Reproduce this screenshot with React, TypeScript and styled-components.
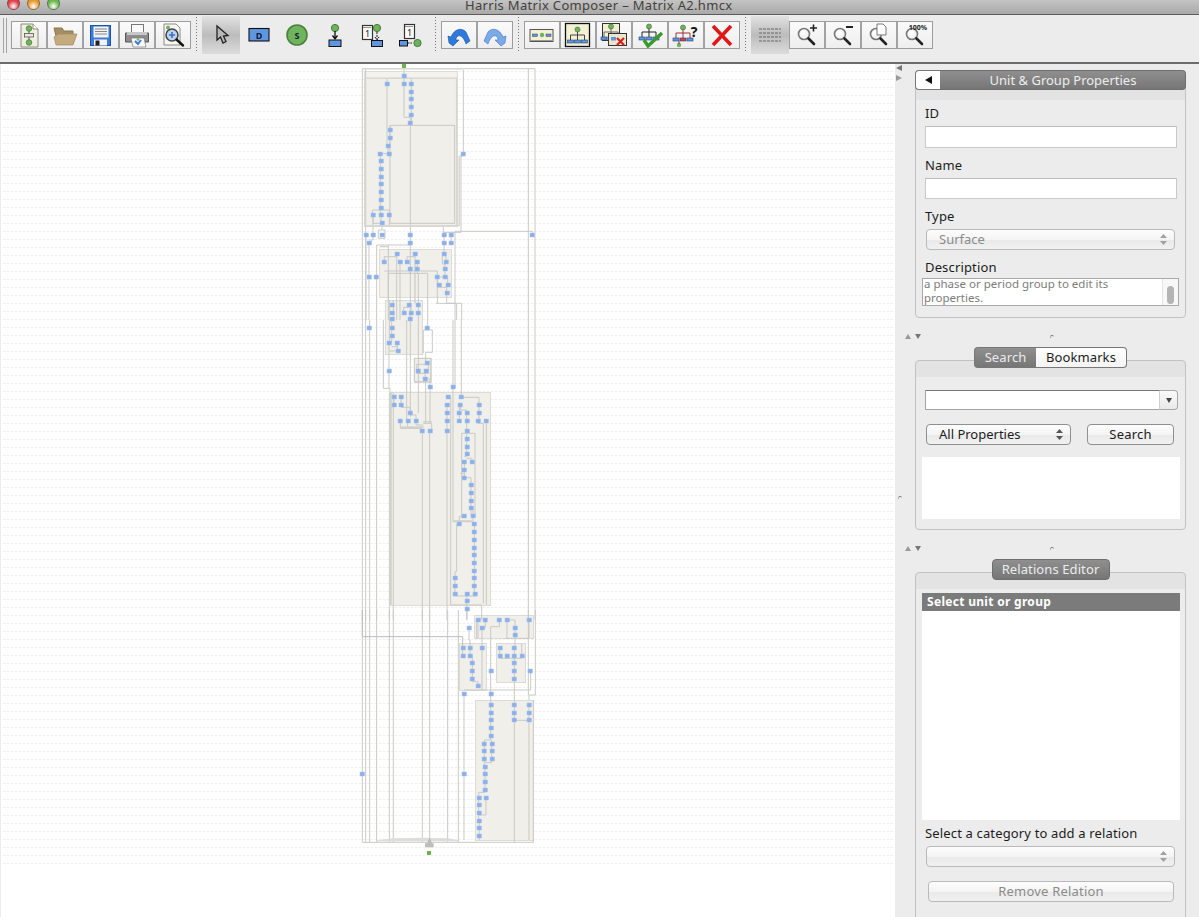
import React from 'react';
import styled, { createGlobalStyle } from 'styled-components';

const GlobalStyle = createGlobalStyle`
  html, body {
    margin: 0;
    padding: 0;
    background: #ececec;
    overflow: hidden;
  }
  * {
    box-sizing: border-box;
  }
`;

const UI_FONT = `"Noto Sans", "DejaVu Sans", sans-serif`;

const Window = styled.div`
  width: 1199px;
  height: 917px;
  overflow: hidden;
  display: flex;
  flex-direction: column;
  font-family: ${UI_FONT};
  font-size: 13px;
  color: #1c1c1c;
`;

const TitleBar = styled.div`
  height: 15px;
  flex: none;
  display: flex;
  align-items: flex-start;
  overflow: hidden;
  padding-left: 7px;
  background: linear-gradient(#c4c4c4, #a9a9a9);
  border-bottom: 1px solid #5c5c5c;
`;

const Light = styled.span<{ $color: string }>`
  width: 13px;
  height: 13px;
  flex: none;
  margin: -3px 7px 0 0;
  border-radius: 50%;
  border: 1px solid rgba(70, 70, 70, 0.55);
  background: radial-gradient(circle at 50% 75%, #fff 0, ${p => p.$color} 55%);
`;

const Title = styled.span`
  margin: -4px 0 0 398px;
  font-size: 13px;
  line-height: 18px;
  letter-spacing: 0.32px;
  color: #453f3c;
  white-space: nowrap;
`;

const Toolbar = styled.div`
  height: 49px;
  flex: none;
  display: flex;
  align-items: center;
  padding: 0 0 7px 3px;
  background: #ececec;
  border-bottom: 2px solid #6c6c6c;
`;

const Grip = styled.div`
  width: 4px;
  height: 35px;
  margin-right: 4px;
  border-left: 1px solid #a4a4a4;
  border-right: 1px solid #a4a4a4;
`;

const ButtonGroup = styled.div`
  display: flex;
  height: 28px;
  border: 1px solid #9d9d9d;
`;

const ToolButton = styled.div`
  width: 36px;
  display: flex;
  align-items: center;
  justify-content: center;
  border-left: 2px solid #a2a2a2;
  background: linear-gradient(#fafafa, #eeeeee);

  &:first-child {
    width: 34px;
    border-left: none;
  }
`;

const PlainTool = styled.div<{ $on?: boolean }>`
  width: 38px;
  height: 38px;
  flex: none;
  display: flex;
  align-items: center;
  justify-content: center;
  background: ${p => (p.$on ? 'linear-gradient(#e2e2e2, #bcbcbc 50%, #dcdcdc)' : 'transparent')};
`;

const Separator = styled.div`
  width: 11px;
  height: 36px;
  flex: none;
  background: repeating-linear-gradient(#777 0 1px, transparent 1px 3px) 5px 0 / 1px 100% no-repeat;
`;

const Body = styled.div`
  flex: 1;
  display: flex;
  min-height: 0;
`;

const Canvas = styled.div`
  width: 895px;
  flex: none;
  background-color: #fff;
  background-image:
    repeating-linear-gradient(90deg, rgba(255, 255, 255, 0.75) 0 2px, transparent 2px 4px),
    repeating-linear-gradient(#efefef 0 1px, transparent 1px 8px);
  background-size: 100% 795px;
  background-position: 0 7px;
  background-repeat: no-repeat;
  border-left: 1px solid #ececec;
`;

const DiagramSvg = styled.svg`
  display: block;
  margin-left: -1px;
`;

const Panel = styled.div`
  flex: 1;
  display: flex;
  min-width: 0;
  background: #ececec;
`;

const Gutter = styled.div`
  width: 20px;
  flex: none;
  display: flex;
  flex-direction: column;
  padding: 1px 0 0 1px;
`;

const TriLeft = styled.span`
  width: 0;
  height: 0;
  margin: 0 0 4px 0;
  border-top: 3px solid transparent;
  border-bottom: 3px solid transparent;
  border-right: 6px solid #777;
`;

const TriRight = styled(TriLeft)`
  border-right: none;
  border-left: 6px solid #999;
`;

const Dot = styled.span<{ $top?: number; $left?: number }>`
  width: 4px;
  height: 3px;
  margin-top: ${p => p.$top ?? 0}px;
  margin-left: ${p => p.$left ?? 0}px;
  border-radius: 3px 3px 0 0;
  border-top: 1.5px solid #777;
  border-left: 1px solid #aaa;
`;

const Column = styled.div`
  width: 271px;
  flex: none;
  display: flex;
  flex-direction: column;
  padding-top: 16px;
`;

const Box = styled.div<{ $band: number; $height: number }>`
  flex: none;
  height: ${p => p.$height}px;
  display: flex;
  flex-direction: column;
  border: 1px solid #c2c2c2;
  border-radius: 4px;
  background: linear-gradient(#e3e3e3 0 ${p => p.$band}px, #ececec ${p => p.$band}px);
`;

const HeaderBar = styled.div`
  display: flex;
  height: 20px;
  margin: -11px -1px 0;
`;

const BackButton = styled.div`
  width: 25px;
  display: flex;
  align-items: center;
  justify-content: center;
  background: #fff;
  border: 1px solid #777;
  border-right: none;
  border-radius: 4px 0 0 4px;
`;

const BackArrow = styled.span`
  width: 0;
  height: 0;
  border-top: 4.5px solid transparent;
  border-bottom: 4.5px solid transparent;
  border-right: 7px solid #111;
`;

const HeaderTitle = styled.div`
  flex: 1;
  text-align: center;
  padding-left: 1px;
  line-height: 18px;
  color: #ededed;
  background: linear-gradient(#8f8f8f, #767676);
  border: 1px solid #6e6e6e;
  border-left: none;
  border-radius: 0 4px 4px 0;
`;

const FieldLabel = styled.div<{ $top: number }>`
  height: 16px;
  margin: ${p => p.$top}px 0 0 9px;
  line-height: 16px;
  letter-spacing: 0.15px;
  white-space: nowrap;
`;

const TextField = styled.div<{ $height: number }>`
  width: 252px;
  height: ${p => p.$height}px;
  margin: 5px 0 0 9px;
  background: #fff;
  border: 1px solid #c9c9c9;
  border-top-color: #bbb;
`;

const SelectBox = styled.div<{ $width: number; $muted?: boolean; $top: number; $left?: number }>`
  width: ${p => p.$width}px;
  height: 21px;
  margin: ${p => p.$top}px 0 0 ${p => p.$left ?? 10}px;
  flex: none;
  display: flex;
  align-items: center;
  justify-content: space-between;
  padding: 0 7px 1px 12px;
  border: 1px solid ${p => (p.$muted ? '#b9b9b9' : '#8f8f8f')};
  border-radius: 4px;
  color: ${p => (p.$muted ? '#8a8a8a' : '#1c1c1c')};
  background: linear-gradient(#fdfdfd, #f4f4f4 50%, #e9e9e9 52%, #f1f1f1);
`;

const DescriptionArea = styled.div`
  width: 257px;
  height: 28px;
  margin: 3px 0 0 6px;
  display: flex;
  background: #fff;
  border: 1px solid #a8a8a8;
`;

const DescriptionText = styled.div`
  flex: 1;
  margin-top: -2px;
  padding-left: 1px;
  font-size: 11.5px;
  line-height: 14px;
  color: #7c7c7c;
  white-space: nowrap;
`;

const ScrollTrack = styled.div`
  width: 16px;
  padding: 7px 4px 1px;
  border-left: 1px solid #e4e4e4;
  background: #f8f8f8;
`;

const ScrollThumb = styled.div`
  height: 18px;
  border-radius: 4px;
  background: #b4b4b4;
`;

const Splitter = styled.div`
  height: 12px;
  margin: 12px 0 18px -10px;
  flex: none;
  display: flex;
  align-items: center;
`;

const TriUp = styled.span`
  width: 0;
  height: 0;
  margin-right: 4px;
  border-left: 3.5px solid transparent;
  border-right: 3.5px solid transparent;
  border-bottom: 5px solid #999;
`;

const TriDown = styled.span`
  width: 0;
  height: 0;
  border-left: 3.5px solid transparent;
  border-right: 3.5px solid transparent;
  border-top: 5px solid #777;
`;

const TabRow = styled.div`
  display: flex;
  justify-content: center;
  height: 21px;
  margin-top: -14px;
  flex: none;
`;

const Tab = styled.div<{ $on?: boolean; $width: number }>`
  width: ${p => p.$width}px;
  text-align: center;
  line-height: 19px;
  letter-spacing: 0.1px;
  color: ${p => (p.$on ? '#ececec' : '#1c1c1c')};
  background: ${p => (p.$on ? 'linear-gradient(#8f8f8f, #767676)' : 'linear-gradient(#fff, #f4f4f4)')};
  border: 1px solid #777;

  &:first-child {
    border-radius: 4px 0 0 4px;
    border-right: none;
  }
  &:last-child {
    border-radius: 0 4px 4px 0;
    border-left: none;
  }
  &:only-child {
    border: 1px solid #6e6e6e;
    border-radius: 4px;
  }
`;

const ComboRow = styled.div`
  display: flex;
  height: 20px;
  margin: 22px 0 0 9px;
  flex: none;
`;

const ComboInput = styled.div`
  width: 235px;
  background: #fff;
  border: 1px solid #a4a4a4;
  border-top-color: #777;
  border-right-color: #cfcfcf;
`;

const ComboArrow = styled.div`
  width: 18px;
  display: flex;
  align-items: center;
  justify-content: center;
  background: linear-gradient(#fafafa, #e9e9e9);
  border: 1px solid #a8a8a8;
  border-left: none;
  border-radius: 0 4px 4px 0;
`;

const SmallDown = styled.span`
  width: 0;
  height: 0;
  border-left: 3.5px solid transparent;
  border-right: 3.5px solid transparent;
  border-top: 5px solid #444;
`;

const ActionsRow = styled.div`
  display: flex;
  flex: none;
`;

const PushButton = styled.div<{ $width: number; $left: number; $top: number; $muted?: boolean }>`
  width: ${p => p.$width}px;
  height: 21px;
  margin: ${p => p.$top}px 0 0 ${p => p.$left}px;
  flex: none;
  text-align: center;
  line-height: 18px;
  letter-spacing: 0.2px;
  color: ${p => (p.$muted ? '#8a8a8a' : '#1c1c1c')};
  border: 1px solid ${p => (p.$muted ? '#b9b9b9' : '#8f8f8f')};
  border-radius: 4px;
  background: linear-gradient(#fdfdfd, #f4f4f4 50%, #e9e9e9 52%, #f1f1f1);
`;

const ListArea = styled.div<{ $height: number; $top: number }>`
  width: 258px;
  height: ${p => p.$height}px;
  margin: ${p => p.$top}px 0 0 6px;
  flex: none;
  background: #fff;
`;

const ListHeader = styled.div`
  padding-left: 5px;
  font-weight: 700;
  font-size: 12px;
  line-height: 18px;
  letter-spacing: 0.3px;
  color: #fff;
  background: #7b7b7b;
`;

const StepperIcon = ({ color = '#555' }: { color?: string }) => (
  <svg width="7" height="11" viewBox="0 0 7 11">
    <path d="M3.5 0 L7 4 H0 Z M0 7 H7 L3.5 11 Z" fill={color} />
  </svg>
);

const C = {
  green: '#6eb45c',
  greenEdge: '#47773b',
  blue: '#5f96e2',
  cream: '#f3f0d4',
};

const Tree = ({ stroke = '#333', x = 0, y = 0, red = false }: { stroke?: string; x?: number; y?: number; red?: boolean }) => (
  <g transform={`translate(${x} ${y})`}>
    <path d="M11 5 V9 M4 9 H18 M4 9 V14 M11 9 V14 M18 9 V14" stroke={stroke} fill="none" />
    <circle cx="11" cy="3.5" r="2.5" fill={C.green} stroke={C.greenEdge} strokeWidth=".7" />
    <rect x="1" y="14" width="6" height="3" fill={C.blue} stroke="#24406e" strokeWidth=".6" />
    <rect x="8" y="14" width="6" height="3" fill={red ? '#d84040' : C.blue} stroke="#24406e" strokeWidth=".6" />
    <rect x="15" y="14" width="6" height="3" fill={C.blue} stroke="#24406e" strokeWidth=".6" />
  </g>
);

const Lens = () => (
  <g>
    <circle cx="11" cy="12" r="5.5" fill="#f4f4f4" stroke="#777" strokeWidth="1.6" />
    <circle cx="10" cy="11" r="2.6" fill="#fff" />
    <path d="M15.5 16.5 L21 22" stroke="#222" strokeWidth="2.6" strokeLinecap="round" />
  </g>
);

const Ico = ({ children, w = 28, h = 26 }: { children: React.ReactNode; w?: number; h?: number }) => (
  <svg width={w} height={h} viewBox={`0 0 ${w} ${h}`}>
    {children}
  </svg>
);

const fileIcons: React.ReactNode[] = [
  <Ico key="new">
    <path d="M6 2 H18 L23 7 V25 H6 Z" fill="#f0efdf" stroke="#8a8a80" />
    <path d="M18 2 V7 H23" fill="#fff" stroke="#8a8a80" />
    <path d="M14 6 V21" stroke="#555" />
    <circle cx="14" cy="6.5" r="2.8" fill={C.green} stroke={C.greenEdge} strokeWidth=".7" />
    <rect x="9.5" y="11.5" width="9" height="3.5" fill="#e8e8e0" stroke="#555" strokeWidth=".8" />
    <circle cx="14" cy="20.5" r="2.8" fill={C.green} stroke={C.greenEdge} strokeWidth=".7" />
  </Ico>,
  <Ico key="open">
    <path d="M3 6 H11 L13 9 H22 V22 H7 Z" fill="#a48e63" stroke="#8b784f" />
    <path d="M7 12 H26 L22 23 H5 L3 15 Z" fill="#c4ab7e" stroke="#a08a5f" strokeWidth=".7" />
  </Ico>,
  <Ico key="save">
    <rect x="3.5" y="3.5" width="20" height="20" fill="#3a7ad8" stroke="#1d52a6" />
    <rect x="6.5" y="4.5" width="15" height="11" fill="#f2f2f2" />
    <path d="M8 7 H20 M8 9.5 H20 M8 12 H20" stroke="#888" />
    <rect x="7" y="17.5" width="13" height="6" fill="#f4f4f4" />
    <rect x="8.5" y="18.5" width="4" height="5" fill="#222" />
  </Ico>,
  <Ico key="print">
    <rect x="8.5" y="2.5" width="12" height="8" fill="#fafafa" stroke="#777" />
    <path d="M2.5 11 H25.5 V20 H2.5 Z" fill="#8d8d8d" stroke="#555" />
    <rect x="4" y="10" width="20" height="3" fill="#c8c8c8" />
    <path d="M8 16 H21 L23 25 H10 Z" fill="#fafafa" stroke="#777" strokeWidth=".7" />
    <path d="M12 19 L15 22 L18 18" stroke="#3a7ad8" strokeWidth="2" fill="none" />
    <circle cx="15" cy="17.5" r="1.3" fill={C.green} />
  </Ico>,
  <Ico key="preview">
    <path d="M5 2 H17 L21 6 V23 H5 Z" fill="#f7f7ef" stroke="#888" />
    <circle cx="9" cy="5.5" r="2" fill={C.green} />
    <circle cx="13" cy="13" r="6" fill="#bcd2ee" stroke="#444" strokeWidth="1.5" />
    <path d="M10 13 H16 M13 10 V16" stroke="#3a6fc0" strokeWidth="1.6" />
    <path d="M17.5 17.5 L24 23.5" stroke="#111" strokeWidth="2.4" strokeLinecap="round" />
  </Ico>,
];

const drawTools: React.ReactNode[] = [
  <Ico key="pointer" w={20} h={22}>
    <path d="M6 2 L6 16 L9.5 13 L12 19 L15 17.5 L12.5 12 L17 11.5 Z" fill="#b8b8b8" stroke="#222" strokeWidth="1.3" />
  </Ico>,
  <Ico key="d" w={24} h={18}>
    <rect x="2" y="2.5" width="20" height="12.5" fill={C.blue} stroke="#111" strokeWidth="1.1" />
    <text x="12" y="12.5" fontSize="9" fontWeight="700" textAnchor="middle" fontFamily={UI_FONT} fill="#123">D</text>
  </Ico>,
  <Ico key="s" w={24} h={24}>
    <circle cx="12" cy="12" r="10" fill={C.green} stroke="#4d7f40" strokeWidth="1.6" />
    <text x="12" y="15.5" fontSize="9" fontWeight="700" textAnchor="middle" fontFamily={UI_FONT} fill="#123">S</text>
  </Ico>,
  <Ico key="node" w={20} h={26}>
    <circle cx="10" cy="6" r="3.6" fill={C.green} stroke={C.greenEdge} />
    <path d="M10 9 V16 M7.5 13.5 L10 17 L12.5 13.5" stroke="#111" strokeWidth="1.3" fill="none" />
    <rect x="4" y="18" width="12" height="6.5" fill={C.blue} stroke="#111" />
  </Ico>,
  <Ico key="cal" w={28} h={26}>
    <rect x="3.5" y="3.5" width="10" height="14" fill="#fafafa" stroke="#333" strokeWidth="1.2" />
    <path d="M4.5 5.5 H12.5" stroke="#333" strokeDasharray="1 1" />
    <text x="8.5" y="15" fontSize="9" textAnchor="middle" fontFamily={UI_FONT} fill="#222">1</text>
    <circle cx="18" cy="6" r="3.6" fill={C.green} stroke={C.greenEdge} />
    <path d="M18 10 V17 M16 15 L18 18 L20 15" stroke="#111" strokeDasharray="2 1" fill="none" />
    <rect x="12.5" y="18.5" width="11" height="6" fill={C.blue} stroke="#111" />
  </Ico>,
  <Ico key="cal2" w={28} h={26}>
    <rect x="7.5" y="2.5" width="10" height="14" fill="#fafafa" stroke="#333" strokeWidth="1.2" />
    <path d="M8.5 4.5 H16.5" stroke="#333" strokeDasharray="1 1" />
    <text x="12.5" y="14" fontSize="9" textAnchor="middle" fontFamily={UI_FONT} fill="#222">1</text>
    <rect x="2.5" y="18.5" width="8" height="5.5" fill={C.blue} stroke="#111" />
    <path d="M11 21 H16" stroke="#111" strokeDasharray="1.5 1" />
    <circle cx="20.5" cy="21" r="3.6" fill={C.green} stroke={C.greenEdge} />
  </Ico>,
];

const undoIcons: React.ReactNode[] = [
  <Ico key="undo">
    <path d="M4 21 L3 14 L6 15 C9 7 17 5 21 10 L25 19 L21 22 C19 16 16 13 13 14 C11 15 11 17 11 18 L14 18 L8 24 Z" fill="#2f78dc" stroke="#1c55a8" strokeWidth=".6" />
  </Ico>,
  <Ico key="redo">
    <path d="M24 21 L25 14 L22 15 C19 7 11 5 7 10 L3 19 L7 22 C9 16 12 13 15 14 C17 15 17 17 17 18 L14 18 L20 24 Z" fill="#7aaae8" stroke="#3f74c0" strokeWidth=".6" />
  </Ico>,
];

const matrixIcons: React.ReactNode[] = [
  <Ico key="link">
    <rect x="2" y="7.5" width="23" height="12" fill={C.cream} stroke="#555" />
    <path d="M3 18.5 H24" stroke="#999" />
    <rect x="4.5" y="12" width="5" height="2.5" fill={C.blue} stroke="#345" strokeWidth=".5" />
    <circle cx="14" cy="13" r="2.2" fill={C.green} />
    <rect x="18" y="12" width="5" height="2.5" fill={C.blue} stroke="#345" strokeWidth=".5" />
  </Ico>,
  <Ico key="tree">
    <rect x="1.5" y="1.5" width="24" height="23" fill={C.cream} stroke="#111" strokeWidth="1.3" />
    <Tree x={2.5} y={4} stroke="#444" />
  </Ico>,
  <Ico key="remove">
    <rect x="2.5" y="1.5" width="17" height="17" fill={C.cream} stroke="#333" />
    <Tree x={0} y={1} stroke="#666" />
    <rect x="8.5" y="11.5" width="18" height="12" fill="#e9e6cc" stroke="#333" />
    <rect x="11" y="15" width="5" height="3.5" fill={C.blue} />
    <path d="M17 16 L24 23 M24 16 L17 23" stroke="#d82020" strokeWidth="2.2" />
  </Ico>,
  <Ico key="check">
    <Tree x={2} y={1} stroke="#222" />
    <path d="M8 18 L12 24 L26 11" stroke="#3b9a2e" strokeWidth="3.4" fill="none" />
  </Ico>,
  <Ico key="question">
    <Tree x={0} y={2} stroke="#a03030" red />
    <circle cx="7" cy="23" r="2.2" fill={C.green} />
    <path d="M7 19 V22" stroke="#a03030" />
    <text x="22" y="15" fontSize="14" fontWeight="700" textAnchor="middle" fontFamily={UI_FONT} fill="#111">?</text>
  </Ico>,
  <Ico key="x">
    <path d="M5 4 L23 23 M23 4 L5 23" stroke="#e01818" strokeWidth="3.6" />
  </Ico>,
];

const GridIcon = () => (
  <Ico w={26} h={24}>
    <path d="M2 6 H24 M2 10 H24 M2 14 H24 M2 18 H24" stroke="#666" strokeDasharray="3 1" strokeWidth="1.2" />
  </Ico>
);

const zoomIcons: React.ReactNode[] = [
  <Ico key="in">
    <Lens />
    <path d="M17 6 H24 M20.5 2.5 V9.5" stroke="#222" strokeWidth="1.6" />
  </Ico>,
  <Ico key="out">
    <Lens />
    <path d="M17 5 H24" stroke="#222" strokeWidth="2" />
  </Ico>,
  <Ico key="page">
    <Lens />
    <path d="M12 2 H18 L21 5 V13 H12 Z" fill="#fff" stroke="#777" />
  </Ico>,
  <Ico key="actual">
    <Lens />
    <text x="17" y="8" fontSize="7" fontWeight="700" textAnchor="middle" fontFamily={UI_FONT} fill="#222">100%</text>
  </Ico>,
];

// group rectangles in page coordinates: x, y, w, h
const groups: number[][] = [
  [364, 71, 93, 155],
  [379, 249, 72, 48],
  [385, 300, 37, 54],
  [414, 358, 17, 24],
  [390, 392, 100, 213],
  [474, 615, 59, 23],
  [459, 643, 27, 47],
  [496, 643, 29, 39],
  [475, 700, 58, 140],
];

// nodes and edges are read in three crops, each with its own origin and 3x scale
const nodesTop: number[][] = [
  [147,48],[96,71],[147,71],[169,71],[169,95],[169,118],[169,141],[169,165],[166,188],[105,210],[105,234],[99,258],[76,281],[101,281],
  [78,303],[78,326],[78,350],[78,372],[78,396],[78,420],[78,443],[54,465],[78,465],[103,465],[81,489],[33,525],[54,525],[81,525],[166,525],
  [267,525],[288,525],[532,525],[42,549],[166,549],[267,549],[288,549],[325,281],[125,582],[180,582],[267,582],[88,605],[135,605],[156,605],
  [187,605],[273,605],[165,628],[187,628],[270,628],[42,651],[64,651],[247,651],[270,651],[253,674],[278,674],[275,698],[110,735],[163,735],
  [190,735],[110,758],[146,758],[168,758],[190,758],[110,778],[166,778],
];

const nodesMid: number[][] = [
  [42,23],[110,24],[110,47],[102,70],[127,70],[130,93],[217,24],[217,130],[189,153],[213,153],[210,177],[102,153],[225,200],[294,200],
  [117,232],[138,232],[279,232],[318,232],[117,255],[138,255],[276,255],[316,255],[372,255],[165,279],[276,279],[313,279],[335,279],[372,279],
  [136,302],[158,302],[183,302],[276,302],[313,302],[335,302],[369,302],[394,302],[202,333],[224,333],[276,333],[335,333],[335,356],[335,380],
  [335,403],[328,426],[351,426],[328,450],[328,473],[348,495],[348,519],[348,543],[348,565],[328,589],[354,589],[313,612],[358,612],[358,636],
  [358,660],[358,683],[358,705],[358,729],[358,752],[300,775],[358,775],[300,798],[358,798],[300,821],[335,821],[361,821],[336,844],[336,867],
];

const nodesLow: number[][] = [
  [369,30],[391,30],[433,30],[456,30],[522,30],[342,53],[381,53],[480,53],[480,76],[323,114],[345,114],[381,114],[434,114],[478,114],[323,137],
  [345,137],[434,137],[456,137],[478,137],[500,137],[352,159],[478,159],[352,183],[407,183],[478,183],[526,183],[352,207],[478,207],[369,229],
  [327,252],[407,252],[407,285],[478,285],[522,285],[407,309],[478,309],[522,309],[407,331],[478,331],[522,331],[407,354],[407,378],[388,401],
  [410,401],[388,424],[410,424],[388,447],[410,447],[390,470],[390,493],[21,493],[327,493],[390,516],[390,540],[371,563],[393,563],[371,586],
  [371,609],[373,632],[373,655],[373,678],
];

const edgesTop = [
  'M22 26 H540 V780 M22 26 V780 M32 26 V780 M520 26 V780',
  'M147 20 V71 M147 55 H96 V258 H99 V281 M147 71 V172 H166 V188 M169 71 V188 M147 55 H169 V71',
  'M166 188 V780 M105 196 H299 V490 H105 V196 M105 196 V258',
  'M76 281 H101 M76 281 V465 M78 450 H52 V465 M78 450 H103 V465 M78 465 V489 M54 465 V490 H81 M103 465 V497 H55 M54 465 V525',
  'M81 489 V510 H70 V535 H90 V510 H81',
  'M325 30 V281 M325 288 H313 V497 H300 M318 288 V517 H265 V497 M267 517 V582 M288 517 V549 M300 514 H532 V525 M300 514 V780',
  'M33 525 V780 M42 549 V780 M54 525 V540 H42 M166 555 H65 V780 M75 560 H100 M100 555 V780',
  'M125 582 V780 M88 590 H125 M88 590 V605 M135 605 V780 M156 590 H180 M156 590 V605 M180 582 V640 M187 605 V640 M165 628 V640',
  'M88 633 H247 V730 M100 640 H218 V780 M100 633 V720 M180 640 V730 M190 640 V780 M115 720 V780 M103 720 V780',
  'M262 587 V612 H273 M267 587 H273 V605 M270 612 V651 M270 651 H247 M247 651 V682 H275 V698 M270 651 H278 V682',
  'M275 705 V730 H320 V780 M305 730 V780 M243 730 H303 M146 758 V742 H163 M168 758 V742',
];

const edgesMid = [
  'M22 0 V900 M32 0 V900 M44 0 V900 M65 0 V900 M520 0 V900 M540 0 V900',
  'M85 0 V205 H105 V217 M102 70 V205 M103 0 V70 M127 70 V80 H110 M127 70 V93 H102 M110 0 V70 M115 217 V900 M103 217 V900',
  'M155 0 V300 M166 0 V290 M190 0 V280 M218 0 V30 M205 30 H232 V97 H212 V130 M205 30 V100',
  'M185 133 H220 V160 H185 Z M210 160 V177 H225 V200 M225 205 V310 M212 185 V310 M178 115 H227 V185 H178 Z',
  'M294 0 V605 H350 M300 0 V200 M319 0 V232 M287 232 V855 H380 V900',
  'M117 232 V255 M138 232 V255 M138 262 H165 V279 M165 285 H183 V302 M136 302 V325 H200 M158 302 V322 H205 M183 302 V315 H205 M202 333 V900 M224 333 V900 M205 310 H230 V333',
  'M276 255 V333 M279 232 H287 M276 333 V900 M318 232 H372 V255 M316 255 V270 H335 V279 M313 255 V302 M335 279 V333 M372 255 V302 M369 302 V310 H385 V850 M394 302 V855',
  'M335 333 V340 H320 V595 M335 340 H360 V585 M335 333 V403 M328 426 V473 M335 410 H328 M351 426 V415 H335 M328 473 H348 V589 M316 460 H328 V473 M354 570 V589',
  'M328 589 H313 V612 M354 596 V612 H358 M358 612 V821 M300 775 V755 H305 V612 M300 775 V821 M300 828 H361 M335 821 V900 M361 821 V830',
];

const edgesLow = [
  'M22 0 V697 H535 V270 M32 0 V697 M44 0 V697 M65 0 V697 M103 0 V697 M115 0 V697 M202 0 V697 M224 0 V697 M278 0 V697 M310 0 V697',
  'M336 0 V30 M369 30 V85 M391 30 V53 H381 M365 30 V85 M381 53 V114 M342 53 V90 H345 V114 M433 30 V50 H407 V183 M456 30 V85 M480 53 V30 H456 M480 53 V114 M522 30 V85 H450',
  'M323 114 V137 M345 114 V137 H352 V207 V215 H369 V229 M381 114 V240 M327 252 V690 M327 240 H527 V183 M407 183 V378 V390 H388 V470',
  'M410 390 V447 V458 H390 M390 470 V547 H371 V632 H373 V690 M393 563 V615 H371',
  'M434 114 V137 V145 H500 V100 M456 137 V145 M478 114 V697 M478 331 H522 M522 285 V690 M522 270 V255 H541 V0 M520 0 V255',
];

const darkLine = 'M22 80 H323 V114 M22 0 V80';
const heavyTop = 'M30 55 V497 H305 V55 H30 M22 26 H325 M180 640 V730 M313 288 V497';
const heavyMid = 'M136 322 H205 M205 305 H230 M294 603 H350 M108 217 V854';
const fanLow = 'M65 691 L115 685 L200 683 L280 685 L310 691 L310 694 L65 694 Z';

const NodeDots = ({ list, ox, oy }: { list: number[][]; ox: number; oy: number }) => (
  <g fill="#8db0e8" stroke="#a9c3ee" strokeWidth=".5">
    {list.map(([x, y], i) => (
      <rect key={i} x={Math.round(ox + x / 3) - 2} y={Math.round(oy + y / 3) - 2} width="4.5" height="4" />
    ))}
  </g>
);

const Crop = ({ ox, oy, d, stroke, width = 1 }: { ox: number; oy: number; d: string[]; stroke: string; width?: number }) => (
  <g transform={`translate(${ox} ${oy}) scale(${1 / 3})`} fill="none" stroke={stroke}>
    {d.map((s, i) => (
      <path key={i} d={s} strokeWidth={width} vectorEffect="non-scaling-stroke" />
    ))}
  </g>
);

const Diagram = () => (
  <DiagramSvg width="895" height="853" viewBox="0 64 895 853">
    {groups.map(([x, y, w, h], i) => (
      <rect key={i} x={x + 0.5} y={y + 0.5} width={w} height={h} fill="#f0efea" stroke="#dcdbd6" />
    ))}
    <rect x="364.5" y="71.5" width="93" height="7" fill="#f3f2ed" stroke="#dcdbd6" />
    <Crop ox={355} oy={60} d={edgesTop} stroke="#c9c9c5" />
    <Crop ox={355} oy={320} d={edgesMid} stroke="#c9c9c5" />
    <Crop ox={355} oy={610} d={edgesLow} stroke="#c9c9c5" />
    <Crop ox={355} oy={60} d={[heavyTop]} stroke="#d8d7d2" width={1.5} />
    <Crop ox={355} oy={320} d={[heavyMid]} stroke="#d0cfca" width={1.5} />
    <Crop ox={355} oy={610} d={[darkLine]} stroke="#bcbcbc" />
    <g transform="translate(355 610) scale(0.3333)">
      <path d={fanLow} fill="#dcdcda" />
      <path d="M224 682 L231 700 L236 700 V712 H210 V700 H216 Z" fill="#bdbdbb" />
    </g>
    <NodeDots list={nodesTop} ox={355} oy={60} />
    <NodeDots list={nodesMid} ox={355} oy={320} />
    <NodeDots list={nodesLow} ox={355} oy={610} />
    <rect x="402" y="64" width="4" height="4" fill="#6fb24f" />
    <rect x="427" y="851" width="4" height="4" fill="#6fb24f" />
  </DiagramSvg>
);

const App: React.FC = () => (
  <Window>
    <GlobalStyle />
    <TitleBar>
      <Light $color="#e2404a" />
      <Light $color="#e89a30" />
      <Light $color="#6cb84c" />
      <Title>Harris Matrix Composer – Matrix A2.hmcx</Title>
    </TitleBar>
    <Toolbar>
      <Grip />
      <ButtonGroup>
        {fileIcons.map((icon, i) => <ToolButton key={i}>{icon}</ToolButton>)}
      </ButtonGroup>
      <Separator />
      {drawTools.map((icon, i) => <PlainTool key={i} $on={i === 0}>{icon}</PlainTool>)}
      <Separator />
      <ButtonGroup>
        {undoIcons.map((icon, i) => <ToolButton key={i}>{icon}</ToolButton>)}
      </ButtonGroup>
      <Separator />
      <ButtonGroup>
        {matrixIcons.map((icon, i) => <ToolButton key={i}>{icon}</ToolButton>)}
      </ButtonGroup>
      <Separator />
      <PlainTool $on><GridIcon /></PlainTool>
      <ButtonGroup>
        {zoomIcons.map((icon, i) => <ToolButton key={i}>{icon}</ToolButton>)}
      </ButtonGroup>
    </Toolbar>
    <Body>
      <Canvas>
        <Diagram />
      </Canvas>
      <Panel>
        <Gutter>
          <TriLeft />
          <TriRight />
          <Dot $top={411} $left={2} />
        </Gutter>
        <Column>
          <Box $band={19} $height={238}>
            <HeaderBar>
              <BackButton><BackArrow /></BackButton>
              <HeaderTitle>Unit &amp; Group Properties</HeaderTitle>
            </HeaderBar>
            <FieldLabel $top={15}>ID</FieldLabel>
            <TextField $height={22} />
            <FieldLabel $top={9}>Name</FieldLabel>
            <TextField $height={21} />
            <FieldLabel $top={9}>Type</FieldLabel>
            <SelectBox $width={249} $muted $top={5}>
              Surface
              <StepperIcon color="#a0a0a0" />
            </SelectBox>
            <FieldLabel $top={9}>Description</FieldLabel>
            <DescriptionArea>
              <DescriptionText>
                a phase or period group to edit its
                <br />
                properties.
              </DescriptionText>
              <ScrollTrack><ScrollThumb /></ScrollTrack>
            </DescriptionArea>
          </Box>
          <Splitter>
            <TriUp />
            <TriDown />
            <Dot $left={129} />
          </Splitter>
          <Box $band={16} $height={170}>
            <TabRow>
              <Tab $on $width={62}>Search</Tab>
              <Tab $width={91}>Bookmarks</Tab>
            </TabRow>
            <ComboRow>
              <ComboInput />
              <ComboArrow><SmallDown /></ComboArrow>
            </ComboRow>
            <ActionsRow>
              <SelectBox $width={145} $top={14}>
                All Properties
                <StepperIcon />
              </SelectBox>
              <PushButton $width={87} $left={16} $top={14}>Search</PushButton>
            </ActionsRow>
            <ListArea $height={62} $top={12} />
          </Box>
          <Splitter>
            <TriUp />
            <TriDown />
            <Dot $left={129} />
          </Splitter>
          <Box $band={16} $height={400}>
            <TabRow>
              <Tab $on $width={118}>Relations Editor</Tab>
            </TabRow>
            <ListArea $height={227} $top={13}>
              <ListHeader>Select unit or group</ListHeader>
            </ListArea>
            <FieldLabel $top={5}>Select a category to add a relation</FieldLabel>
            <SelectBox $width={249} $muted $top={5}>
              <span />
              <StepperIcon color="#a0a0a0" />
            </SelectBox>
            <PushButton $width={246} $left={12} $top={14} $muted>Remove Relation</PushButton>
          </Box>
        </Column>
      </Panel>
    </Body>
  </Window>
);

export default App;
